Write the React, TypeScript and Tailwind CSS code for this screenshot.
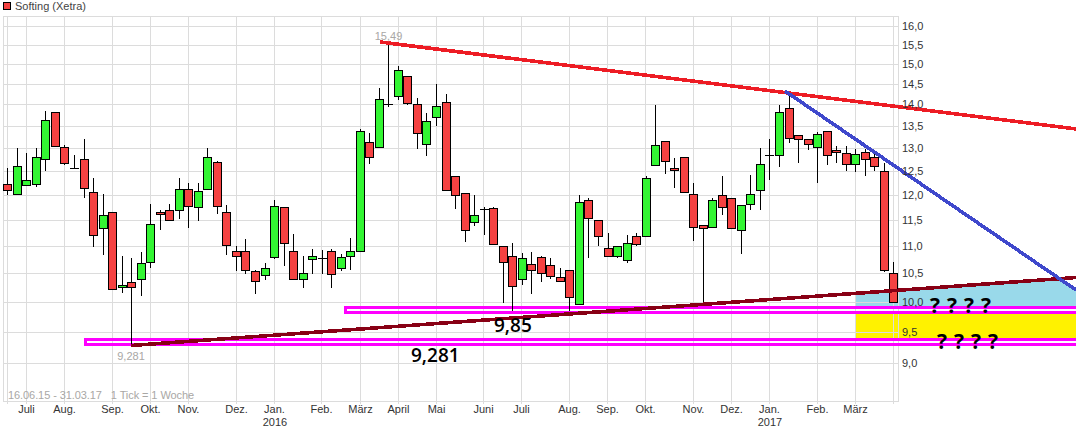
const UP = "#33f533"
const DOWN = "#f54242"

// top wick, body top, body bottom, bottom wick, colour - all in page pixels
const candles: Array<[number, number, number, number, "r" | "g"]> = [
  [168, 184, 190, 195, "r"], [148, 166, 194, 194, "g"], [153, 180, 185, 185, "g"], [148, 157, 184, 187, "g"],
  [111, 120, 159, 171, "g"], [112, 112, 146, 146, "r"], [145, 147, 163, 165, "r"], [155, 168, 168, 168, "r"],
  [139, 159, 188, 198, "r"], [178, 192, 235, 247, "r"], [194, 215, 228, 255, "g"], [212, 212, 289, 290, "r"],
  [256, 285, 287, 293, "g"], [258, 282, 287, 346, "r"], [252, 263, 279, 296, "g"], [204, 224, 262, 268, "g"],
  [210, 212, 214, 230, "r"], [204, 210, 220, 221, "r"], [178, 189, 210, 219, "g"], [183, 189, 206, 228, "r"],
  [183, 191, 207, 221, "g"], [148, 157, 189, 189, "g"], [161, 162, 206, 214, "r"], [205, 212, 245, 255, "r"],
  [246, 251, 256, 271, "r"], [239, 251, 270, 274, "r"], [270, 271, 281, 294, "r"], [263, 268, 275, 280, "g"],
  [200, 206, 257, 259, "g"], [207, 207, 243, 266, "r"], [234, 251, 279, 279, "r"], [256, 273, 279, 288, "g"],
  [249, 256, 259, 274, "g"], [250, 258, 258, 274, "g"], [249, 251, 274, 288, "r"], [254, 257, 268, 271, "g"],
  [238, 251, 256, 270, "g"], [129, 131, 251, 251, "g"], [133, 142, 157, 164, "r"], [88, 99, 147, 147, "g"],
  [43, 104, 104, 107, "g"], [66, 70, 96, 100, "g"], [76, 76, 103, 105, "r"], [98, 104, 133, 149, "r"],
  [113, 121, 144, 156, "g"], [84, 106, 117, 126, "g"], [94, 102, 190, 190, "r"], [176, 176, 195, 209, "r"],
  [193, 193, 230, 242, "r"], [195, 215, 222, 226, "g"], [207, 209, 209, 235, "r"], [207, 208, 244, 244, "r"],
  [246, 246, 262, 303, "r"], [243, 256, 286, 311, "r"], [253, 258, 279, 285, "g"], [252, 264, 270, 294, "r"],
  [256, 257, 273, 282, "r"], [258, 265, 276, 279, "r"], [268, 277, 281, 282, "r"], [270, 270, 297, 311, "r"],
  [195, 202, 304, 304, "g"], [198, 200, 218, 258, "r"], [220, 220, 236, 246, "r"], [233, 248, 256, 256, "r"],
  [246, 246, 256, 258, "g"], [235, 243, 260, 263, "g"], [233, 236, 244, 246, "r"], [176, 178, 236, 236, "g"],
  [105, 145, 165, 165, "g"], [141, 141, 161, 174, "r"], [158, 168, 170, 188, "r"], [157, 157, 192, 192, "r"],
  [183, 194, 227, 241, "r"], [225, 225, 228, 304, "r"], [198, 200, 227, 227, "g"], [176, 195, 207, 215, "r"],
  [198, 198, 228, 228, "r"], [205, 205, 230, 254, "g"], [175, 194, 204, 210, "g"], [148, 164, 190, 210, "g"],
  [139, 155, 155, 180, "g"], [105, 112, 155, 167, "g"], [93, 108, 138, 143, "r"], [135, 135, 139, 163, "r"],
  [139, 139, 144, 150, "r"], [132, 134, 147, 183, "g"], [131, 131, 155, 165, "r"], [146, 150, 152, 163, "r"],
  [146, 153, 164, 171, "r"], [149, 154, 164, 172, "g"], [149, 152, 159, 176, "r"], [150, 157, 166, 171, "r"],
  [163, 171, 270, 272, "r"], [262, 273, 302, 302, "r"],
]

const gridX = [7, 26, 64, 112, 150, 188, 236, 274, 321, 360, 398, 436, 483, 521, 569, 607, 645, 693, 731, 769, 817, 855, 893]

const priceLabels: Array<[string, number]> = [
  ["16,0", 26], ["15,5", 45], ["15,0", 64], ["14,5", 84], ["14,0", 104], ["13,5", 126], ["13,0", 148], ["12,5", 171],
  ["12,0", 195], ["11,5", 220], ["11,0", 246], ["10,5", 273], ["10,0", 302], ["9,5", 332], ["9,0", 363],
]

const monthLabels: Array<[string, number]> = [
  ["Juli", 26], ["Aug.", 64], ["Sep.", 112], ["Okt.", 150], ["Nov.", 188], ["Dez.", 236], ["Jan.", 274], ["Feb.", 321],
  ["März", 360], ["April", 398], ["Mai", 436], ["Juni", 483], ["Juli", 521], ["Aug.", 569], ["Sep.", 607], ["Okt.", 645],
  ["Nov.", 693], ["Dez.", 731], ["Jan.", 769], ["Feb.", 817], ["März", 855],
]

const pink = "#ff00ff"

function Candles() {
  return (
    <g>
      {candles.map(([top, bodyTop, bodyBottom, bottom, color], i) => {
        const cx = Math.round(7.3 + 9.527 * i)
        const flat = bodyBottom - bodyTop < 1
        return (
          <g key={i}>
            <line x1={cx + 0.5} x2={cx + 0.5} y1={top} y2={bottom} stroke="#000" />
            {flat ? (
              <line x1={cx - 4} x2={cx + 5} y1={bodyTop + 0.5} y2={bodyTop + 0.5} stroke="#000" />
            ) : (
              <rect
                x={cx - 3.5}
                y={bodyTop + 0.5}
                width={8}
                height={bodyBottom - bodyTop}
                fill={color === "g" ? UP : DOWN}
                stroke="#000"
              />
            )}
          </g>
        )
      })}
    </g>
  )
}

export default function App() {
  return (
    <div className="w-[1076px] h-[434px] overflow-hidden bg-white font-['Liberation_Sans',sans-serif] text-[11px] text-[#333]">
      <div className="flex h-4 items-center gap-[4px] pl-[3px] pb-1">
        <span className="w-2 h-2 border border-black bg-[#f54242]" />
        <span className="leading-3 text-[#444]">Softing (Xetra)</span>
      </div>
      <svg width={1076} height={418} viewBox="0 16 1076 418" className="block">
        {/* painted areas */}
        <polygon points="855,293 1058,278 1076,291 1076,306 855,306" fill="#99d9ea" />
        <rect x={855} y={314} width={221} height={24} fill="#fff200" />

        {/* grid */}
        <g stroke="#dcdcdc" shapeRendering="crispEdges">
          {gridX.map((x) => (
            <line key={x} x1={x + 0.5} x2={x + 0.5} y1={16} y2={404} />
          ))}
          {priceLabels.map(([label, y]) => (
            <line key={label} x1={3} x2={898} y1={y + 0.5} y2={y + 0.5} />
          ))}
          <rect x={3.5} y={16.5} width={895} height={385} fill="none" />
        </g>

        <rect x={345.5} y={307.5} width={760} height={5} fill="none" stroke={pink} strokeWidth={3} shapeRendering="crispEdges" />
        <rect x={85.5} y={339.5} width={1020} height={5} fill="none" stroke={pink} strokeWidth={3} shapeRendering="crispEdges" />

        <g shapeRendering="crispEdges">
          <Candles />
        </g>

        {/* trend lines */}
        <g strokeWidth={3.6} shapeRendering="crispEdges">
          <line x1={131} y1={345.5} x2={1076} y2={277.5} stroke="#880015" />
          <line x1={380} y1={42} x2={1076} y2={129} stroke="#ed1c24" />
          <line x1={785} y1={91} x2={1076} y2={290} stroke="#3f48cc" />
        </g>

        <g fill="#a9a7a5">
          <text x={388.5} y={40} textAnchor="middle">15,49</text>
          <text x={131} y={360} textAnchor="middle">9,281</text>
          <text x={8} y={399} letterSpacing={-0.08} xmlSpace="preserve">16.06.15 - 31.03.17   1 Tick = 1 Woche</text>
        </g>

        <g fill="#333">
          {priceLabels.map(([label, y]) => (
            <text key={label} x={902} y={y + 4}>{label}</text>
          ))}
          {monthLabels.map(([label, x], i) => (
            <text key={i} x={x + 0.5} y={413} textAnchor="middle">{label}</text>
          ))}
          <text x={275} y={426} textAnchor="middle">2016</text>
          <text x={770} y={426} textAnchor="middle">2017</text>
        </g>

        <g fill="#000" className="font-['Open_Sans',sans-serif] text-[19px] font-semibold">
          <text x={494} y={332}>9,85</text>
          <text x={411} y={362}>9,281</text>
          {[930, 947, 964, 981].map((x) => (
            <text key={x} x={x} y={313} className="text-[21px] font-bold">?</text>
          ))}
          {[937, 954, 971, 988].map((x) => (
            <text key={x} x={x} y={349} className="text-[21px] font-bold">?</text>
          ))}
        </g>
      </svg>
    </div>
  )
}
